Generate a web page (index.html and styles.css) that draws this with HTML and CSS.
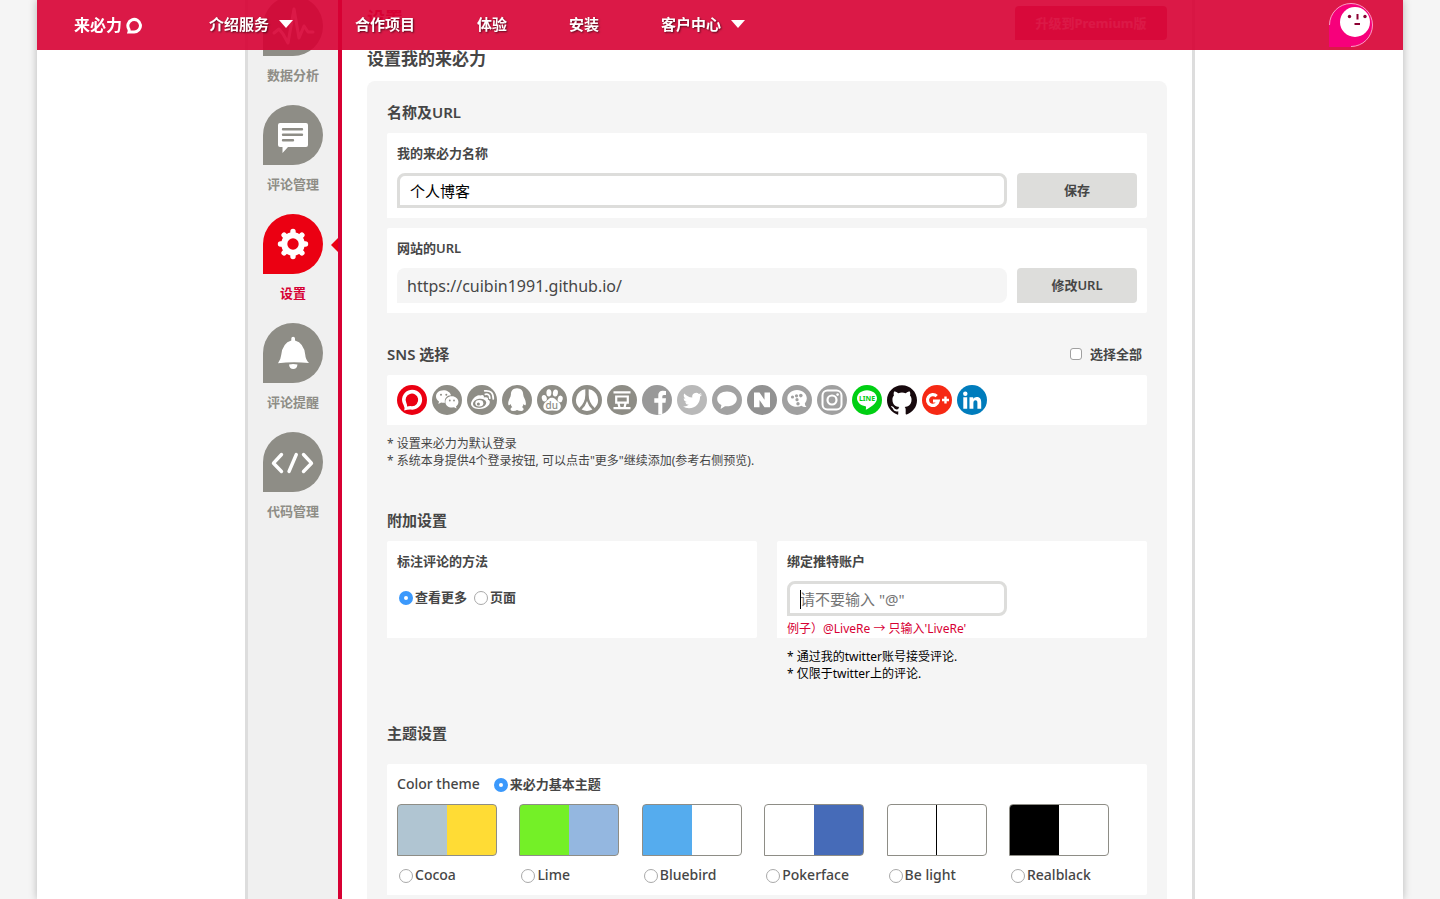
FILE: index.html
```html
<!DOCTYPE html>
<html lang="zh-CN">
<head>
<meta charset="utf-8">
<meta name="viewport" content="width=device-width, initial-scale=1">
<title>来必力 - 设置</title>
<link rel="stylesheet" href="styles.css">
</head>
<body>
<div class="page">
  <header class="topbar">
    <a class="logo" href="#">来必力<svg viewBox="0 0 16 17" aria-hidden="true"><path d="M3 15H8A6.300 6.300 0 1 0 2.800 12Q3.500 13.500 3 15Z"/></svg></a>
    <nav class="nav">
      <a href="#">介绍服务<i class="caret"></i></a>
      <a href="#">合作项目</a>
      <a href="#">体验</a>
      <a href="#">安装</a>
      <a href="#">客户中心<i class="caret"></i></a>
    </nav>
    <a class="avatar" href="#" aria-label="账户">
      <svg viewBox="0 0 44 44"><rect x="0" y="22" width="22" height="22" fill="#f7007b"/><circle cx="22" cy="22" r="21.500" fill="#f7007b"/><path d="M.5 22A21.500 21.500 0 0 1 22 .5A21.500 21.500 0 0 1 43.500 22A21.500 21.500 0 0 1 22 43.500" fill="none" stroke="#fb9cc4"/><circle cx="26" cy="19" r="15" fill="#fff"/><circle cx="20.500" cy="13.500" r="1.700" fill="#8c0032"/><circle cx="36" cy="13.500" r="1.700" fill="#8c0032"/><path d="M28.500 11v5.500M25.500 21h5.500" stroke="#8c0032" stroke-width="2"/></svg>
    </a>
  </header>

  <div class="layout">
    <nav class="sidebar">
      <a class="side-item" href="#">
        <svg class="side-icon" viewBox="0 0 60 60"><path d="M11 37L16 33L20 38L25 47L31 13L36 42L41 30L45 36H50" fill="none" stroke="#fff" stroke-width="3" stroke-linejoin="round" stroke-linecap="round"/></svg>
        <span>数据分析</span>
      </a>
      <a class="side-item" href="#">
        <svg class="side-icon" viewBox="0 0 60 60"><path d="M17 18H43Q45 18 45 20V40Q45 42 43 42H25L19.500 48V42H17Q15 42 15 40V20Q15 18 17 18Z" fill="#fff"/><path d="M20 24.300H39M20 29.800H39M20 35.200H30" stroke="#8e8d86" stroke-width="2.400" stroke-linecap="round"/></svg>
        <span>评论管理</span>
      </a>
      <a class="side-item active" href="#">
        <svg class="side-icon" viewBox="0 0 60 60"><circle cx="30" cy="30" r="11.800" fill="#fff"/><path d="M30 17.500V42.500M17.500 30H42.500M21.100 21.100L38.900 38.900M38.900 21.100L21.100 38.900" stroke="#fff" stroke-width="5.400" stroke-linecap="round"/><circle cx="30" cy="30" r="5.700" fill="#eb0012"/></svg>
        <span>设置</span>
      </a>
      <a class="side-item" href="#">
        <svg class="side-icon" viewBox="0 0 60 60"><path d="M28.300 15.500A1.700 1.700 0 0 1 32 15.500V17.500Q41 20 42.300 32Q42.500 36.500 46 40Q30 38.200 15 40.200Q17.800 36.500 18.200 32Q19.500 20 28.300 17.500Z" fill="#fff"/><path d="M26 41.500Q30 40.500 34.500 41.500Q34 46 30.200 46Q26.500 46 26 41.500Z" fill="#fff"/></svg>
        <span>评论提醒</span>
      </a>
      <a class="side-item" href="#">
        <svg class="side-icon" viewBox="0 0 60 60"><path d="M18.500 22.500L10.500 31.200L18.500 39.500M40.500 22.500L48.500 31.200L40.500 39.500M33.300 22.500L26 39.500" fill="none" stroke="#fff" stroke-width="3.400" stroke-linecap="round" stroke-linejoin="round"/></svg>
        <span>代码管理</span>
      </a>
    </nav>

    <main class="content">
      <div class="title-row">
        <h1>设置</h1>
        <button class="premium" type="button">升级到Premium版</button>
      </div>
      <h2>设置我的来必力</h2>

      <div class="panel">
        <section>
          <h3>名称及URL</h3>
          <div class="card">
            <label class="field-label" for="site-name">我的来必力名称</label>
            <div class="field-row">
              <input class="text-input" id="site-name" type="text" value="个人博客">
              <button class="btn" type="button">保存</button>
            </div>
          </div>
          <div class="card">
            <label class="field-label" for="site-url">网站的URL</label>
            <div class="field-row">
              <input class="text-input locked" id="site-url" type="text" value="https://cuibin1991.github.io/" readonly>
              <button class="btn" type="button">修改URL</button>
            </div>
          </div>
        </section>

        <section>
          <div class="heading-row">
            <h3>SNS 选择</h3>
            <label class="check"><input type="checkbox">选择全部</label>
          </div>
          <div class="card sns">
            <button type="button" aria-label="LiveRe"><svg viewBox="0 0 30 30"><circle cx="15" cy="15" r="15" fill="#eb0012"/><path d="M7.200 25.500Q8 22.500 6.600 20A10 10 0 1 1 15.500 24.700Q11 24.300 7.200 25.500Z" fill="#fff"/><path d="M10 21.500Q10.300 20 9.300 17.800A6.300 6.300 0 1 1 15 21.200Q12.500 20.900 10 21.500Z" fill="#eb0012"/></svg></button>
            <button type="button" aria-label="WeChat"><svg viewBox="0 0 30 30"><circle cx="15" cy="15" r="15" fill="#8e8d86"/><path d="M11.500 5.200C7 5.200 4 8 4 11.500C4 13.600 5.200 15.200 7 16.500L6.300 19L9.200 17.500Q11 18 13 17.700C12 13.500 15 10.300 19 10.200C18.300 7.200 15 5.200 11.500 5.200Z" fill="#fff"/><path d="M19.800 11.300C16 11.300 13.400 13.900 13.400 17C13.400 20.200 16.200 22.600 20 22.600L22 22.300L24.600 23.600L24 21.500C25.500 20.400 26.400 18.900 26.400 17C26.400 13.900 23.500 11.300 19.800 11.300Z" fill="#fff"/><g fill="#8e8d86"><circle cx="9" cy="9.700" r="1"/><circle cx="14.300" cy="9.700" r="1"/><circle cx="17.800" cy="15.500" r=".9"/><circle cx="22" cy="15.500" r=".9"/></g></svg></button>
            <button type="button" aria-label="Weibo"><svg viewBox="0 0 30 30"><circle cx="15" cy="15" r="15" fill="#8e8d86"/><path d="M13 10.500C15.500 9.300 17.500 10 16.800 12.500C20 11.500 21.800 12.700 20.800 14.600C23 15.400 23.500 17.300 22 19.700C20 22.500 16 24.200 11.500 24C6.800 23.700 3.700 21.300 4 18.200C4.300 15.500 9.500 9 13 10.500Z" fill="#fff"/><ellipse cx="12.600" cy="18.300" rx="6.700" ry="4.500" transform="rotate(-8 12.600 18.300)" fill="#8e8d86"/><ellipse cx="12.300" cy="18.300" rx="4" ry="3.200" fill="#fff"/><circle cx="11.400" cy="18.900" r="1.500" fill="#8e8d86"/><path d="M18.300 9.300Q22.800 8.500 22.800 13.200M17.700 5.900Q26.500 5 26.300 14" fill="none" stroke="#fff" stroke-width="1.700" stroke-linecap="round"/></svg></button>
            <button type="button" aria-label="QQ"><svg viewBox="0 0 30 30"><circle cx="15" cy="15" r="15" fill="#8e8d86"/><path d="M15 3.200C11 3.200 8.800 6 8.900 9.500C9 12 6.200 15 6.200 18.200C6.200 20.500 7 21 8.600 19Q9 21 10.300 22.300C8 23 7.800 25.800 11 26Q14 26 15 25Q16.500 26 19.500 26C22.500 25.700 22 23 20 22.300Q21.200 21 21.600 19C23 21 23.900 20.500 23.900 18.200C23.900 15 21.200 12 21.200 9.500C21.300 6 19 3.200 15 3.200Z" fill="#fff"/></svg></button>
            <button type="button" aria-label="Baidu"><svg viewBox="0 0 30 30"><circle cx="15" cy="15" r="15" fill="#8e8d86"/><g fill="#fff"><ellipse cx="7.300" cy="13.300" rx="2.500" ry="3.300" transform="rotate(-12 7.300 13.300)"/><ellipse cx="11.900" cy="7.800" rx="2.500" ry="3.600"/><ellipse cx="18.400" cy="8" rx="2.500" ry="3.500" transform="rotate(10 18.400 8)"/><ellipse cx="23.200" cy="13.900" rx="2.500" ry="3.300" transform="rotate(12 23.200 13.900)"/><path d="M15 12.800C18 12.800 18.500 15 21.500 17C25.500 20 24 25.800 19.500 25.800Q15 25 11 25.800C6 26 4.800 20.500 8.500 17C11.500 14.800 11.800 12.800 15 12.800Z"/></g><text x="14.800" y="24" class="icon-du">du</text></svg></button>
            <button type="button" aria-label="Renren"><svg viewBox="0 0 30 30"><circle cx="15" cy="15" r="15" fill="#8e8d86"/><g fill="#fff"><path d="M13.300 4.300V10Q13.300 17.500 7.300 23A11 11 0 0 1 13.300 4.300Z"/><path d="M16.700 4.300V10Q16.700 17.500 22.700 23A11 11 0 0 0 16.700 4.300Z"/><path d="M15 16Q13.500 21 9.600 24.600Q15 27.500 20.400 24.600Q16.500 21 15 16Z"/></g></svg></button>
            <button type="button" aria-label="Douban"><svg viewBox="0 0 30 30"><circle cx="15" cy="15" r="15" fill="#8e8d86"/><path d="M6.500 7.300H23.500M6.500 23.200H23.500M9.200 11.500H20.800V17.700H9.200ZM11.500 18.500L12.500 22.500M18.500 18.500L17.500 22.500" fill="none" stroke="#fff" stroke-width="2.200"/></svg></button>
            <button type="button" aria-label="Facebook"><svg viewBox="0 0 30 30"><circle cx="15" cy="15" r="15" fill="#999"/><path d="M16.300 29.500V17.700H12.300V13.300H16.300V10.500C16.300 7 18.500 5.800 21 5.800Q23 5.800 24 6V10H22C20.500 10 20.300 10.700 20.300 12V13.300H24L23.500 17.700H20.300V29Z" fill="#fff"/></svg></button>
            <button type="button" aria-label="Twitter"><svg viewBox="0 0 30 30"><circle cx="15" cy="15" r="15" fill="#b9b9b9"/><path transform="translate(6 6) scale(.79)" fill="#fff" d="M23.953 4.570a10 10 0 01-2.825.775 4.958 4.958 0 002.163-2.723c-.951.555-2.005.959-3.127 1.184a4.920 4.920 0 00-8.384 4.482C7.690 8.095 4.067 6.130 1.640 3.162a4.822 4.822 0 00-.666 2.475c0 1.710.87 3.213 2.188 4.096a4.904 4.904 0 01-2.228-.616v.06a4.923 4.923 0 003.946 4.827 4.996 4.996 0 01-2.212.085 4.936 4.936 0 004.604 3.417 9.867 9.867 0 01-6.102 2.105c-.39 0-.779-.023-1.170-.067a13.995 13.995 0 007.557 2.209c9.053 0 13.998-7.496 13.998-13.985 0-.21 0-.42-.015-.63A9.935 9.935 0 0024 4.590z"/></svg></button>
            <button type="button" aria-label="Kakao"><svg viewBox="0 0 30 30"><circle cx="15" cy="15" r="15" fill="#a2a2a2"/><path d="M15 6.500C9.500 6.500 5.200 9.700 5.200 13.900C5.200 16.500 6.800 18.800 9.400 20.100L8.600 24L13 21.200Q14 21.300 15 21.300C20.500 21.300 24.800 18 24.800 13.900C24.800 9.700 20.500 6.500 15 6.500Z" fill="#fff"/></svg></button>
            <button type="button" aria-label="Naver"><svg viewBox="0 0 30 30"><circle cx="15" cy="15" r="15" fill="#929292"/><path d="M7 7.500H12.500L17.500 14.800V7.500H23V22.300H17.500L12.500 15V22.300H7Z" fill="#fff"/></svg></button>
            <button type="button" aria-label="Tistory"><svg viewBox="0 0 30 30"><circle cx="15" cy="15" r="15" fill="#a0a0a0"/><path d="M15 5C9.500 5 5.300 8.600 5.300 13.400C5.300 18.200 9.500 21.800 15 21.800Q17.500 21.700 19.500 20.700Q21.500 22.500 24.500 21.800Q22.800 20.500 22.800 18.400Q24.800 16.300 24.800 13.400C24.800 8.600 20.500 5 15 5Z" fill="#fff"/><g fill="#a0a0a0"><circle cx="10.500" cy="12" r="1.600"/><circle cx="14.500" cy="10.800" r="1.600"/><circle cx="18.800" cy="10.600" r="1.800"/><circle cx="15" cy="14.700" r="1.600"/><circle cx="16" cy="18.700" r="1.700"/></g></svg></button>
            <button type="button" aria-label="Instagram"><svg viewBox="0 0 30 30"><circle cx="15" cy="15" r="15" fill="#a0a0a0"/><rect x="5.500" y="5.500" width="19" height="19" rx="5" fill="none" stroke="#fff" stroke-width="2"/><circle cx="15" cy="15" r="4.500" fill="none" stroke="#fff" stroke-width="2.200"/><circle cx="20.600" cy="9.600" r="1.300" fill="#fff"/></svg></button>
            <button type="button" aria-label="LINE"><svg viewBox="0 0 30 30"><circle cx="15" cy="15" r="15" fill="#00cf13"/><path d="M15 5.200C9.500 5.200 5 8.800 5 13.300C5 17.300 8.500 20.600 13.300 21.300C14.500 21.600 14 22.500 13.800 24.800C18 22.800 25 18.500 25 13.300C25 8.800 20.500 5.200 15 5.200Z" fill="#fff"/><text x="15" y="16" class="icon-line">LINE</text></svg></button>
            <button type="button" aria-label="GitHub"><svg viewBox="0 0 24 24"><path fill="#17090d" d="M12 .297c-6.630 0-12 5.373-12 12 0 5.303 3.438 9.800 8.205 11.385.6.113.82-.258.82-.577 0-.285-.01-1.040-.015-2.040-3.338.724-4.042-1.610-4.042-1.610C4.422 18.070 3.633 17.700 3.633 17.700c-1.087-.744.084-.729.084-.729 1.205.084 1.838 1.236 1.838 1.236 1.070 1.835 2.809 1.305 3.495.998.108-.776.417-1.305.76-1.605-2.665-.3-5.466-1.332-5.466-5.930 0-1.310.465-2.380 1.235-3.220-.135-.303-.54-1.523.105-3.176 0 0 1.005-.322 3.300 1.230.96-.267 1.980-.399 3-.405 1.020.006 2.040.138 3 .405 2.280-1.552 3.285-1.230 3.285-1.230.645 1.653.24 2.873.12 3.176.765.84 1.230 1.910 1.230 3.220 0 4.610-2.805 5.625-5.475 5.920.42.36.81 1.096.81 2.220 0 1.606-.015 2.896-.015 3.286 0 .315.21.69.825.57C20.565 22.092 24 17.592 24 12.297c0-6.627-5.373-12-12-12"/></svg></button>
            <button type="button" aria-label="Google+"><svg viewBox="0 0 30 30"><circle cx="15" cy="15" r="15" fill="#f62914"/><path d="M14.700 11.200A5.400 5.400 0 1 0 16.200 16H11" fill="none" stroke="#fff" stroke-width="3.200"/><path d="M23.500 11.500V18.500M20 15H27" stroke="#fff" stroke-width="2.400"/></svg></button>
            <button type="button" aria-label="LinkedIn"><svg viewBox="0 0 30 30"><circle cx="15" cy="15" r="15" fill="#007cbc"/><circle cx="8.300" cy="8.700" r="2.200" fill="#fff"/><path d="M6.300 12.300H10.200V23.800H6.300ZM12.500 12.300H16.200V13.800Q17.300 12 19.700 12C23.500 12 24.200 14.500 24.200 17.500V23.800H20.400V18C20.400 16.300 20 15.300 18.500 15.300C17 15.300 16.400 16.500 16.400 18V23.800H12.500Z" fill="#fff"/></svg></button>
          </div>
          <p class="hints">* 设置来必力为默认登录<br>* 系统本身提供4个登录按钮, 可以点击"更多"继续添加(参考右侧预览).</p>
        </section>

        <section>
          <h3>附加设置</h3>
          <div class="columns">
            <fieldset class="card">
              <legend class="field-label">标注评论的方法</legend>
              <div class="radio-row">
                <label class="radio"><input type="radio" name="paging" checked>查看更多</label>
                <label class="radio"><input type="radio" name="paging">页面</label>
              </div>
            </fieldset>
            <div class="card twitter">
              <label class="field-label" for="twitter">绑定推特账户</label>
              <div class="focused"><input class="text-input" id="twitter" type="text" placeholder="请不要输入 &quot;@&quot;"></div>
              <p class="example">例子）@LiveRe → 只输入'LiveRe'</p>
            </div>
            <p class="hints dark">* 通过我的twitter账号接受评论.<br>* 仅限于twitter上的评论.</p>
          </div>
        </section>

        <section class="theme-section">
          <h3>主题设置</h3>
          <div class="card">
            <div class="theme-head">
              <span>Color theme</span>
              <label class="radio"><input type="radio" name="theme" checked>来必力基本主题</label>
            </div>
            <div class="themes">
              <label class="theme"><span class="swatch cocoa"></span><span class="radio"><input type="radio" name="theme">Cocoa</span></label>
              <label class="theme"><span class="swatch lime"></span><span class="radio"><input type="radio" name="theme">Lime</span></label>
              <label class="theme"><span class="swatch bluebird"></span><span class="radio"><input type="radio" name="theme">Bluebird</span></label>
              <label class="theme"><span class="swatch pokerface"></span><span class="radio"><input type="radio" name="theme">Pokerface</span></label>
              <label class="theme"><span class="swatch belight"></span><span class="radio"><input type="radio" name="theme">Be light</span></label>
              <label class="theme"><span class="swatch realblack"></span><span class="radio"><input type="radio" name="theme">Realblack</span></label>
            </div>
          </div>
        </section>
      </div>
    </main>
  </div>
</div>
</body>
</html>
```
FILE: styles.css
```css
* { box-sizing: border-box; }

body {
  margin: 0;
  background: #f5f5f5;
  color: #464646;
  font: 500 13px/20px "Noto Sans", "Noto Sans CJK SC", sans-serif;
}

h1, h2, h3, p, fieldset { margin: 0; }
a { color: inherit; text-decoration: none; }
button, input { font: inherit; color: inherit; }
button { cursor: pointer; border: 0; }
svg { display: block; }

.page {
  max-width: 1366px;
  min-height: 100vh;
  margin: 0 auto;
  background: #fff;
  box-shadow: 0 0 8px rgba(0, 0, 0, .25);
  display: flex;
  flex-direction: column;
}

/* Top bar */
.topbar {
  position: fixed;
  top: 0;
  z-index: 10;
  width: 100%;
  max-width: 1366px;
  height: 50px;
  padding: 0 30px 0 37px;
  display: flex;
  align-items: center;
  background: rgba(215, 0, 51, .9);
  color: #fff;
  font-size: 15px;
  font-weight: 700;
}
.logo { display: flex; align-items: center; gap: 4px; font-size: 16px; }
.logo svg { width: 16px; height: 17px; fill: none; stroke: #fff; stroke-width: 3; }
.nav {
  flex: 1;
  display: flex;
  gap: 62px;
  margin-left: 67px;
  padding-bottom: 2px;
  text-shadow: 1px 1px 2px rgba(0, 0, 0, .6);
}
.nav a { display: flex; align-items: center; gap: 10px; }
.caret {
  border: 7px solid transparent;
  border-top: 8px solid #fff;
  border-bottom: 0;
}
.avatar { width: 44px; height: 44px; }

/* Columns */
.layout {
  flex: 1;
  width: 100%;
  max-width: 950px;
  margin: 0 auto;
  display: flex;
  border: solid #ddd;
  border-width: 0 3px;
}
.sidebar {
  width: 94px;
  flex: none;
  background: #f0f0f0;
  border-right: 4px solid #d70033;
}
.side-item {
  position: relative;
  display: flex;
  flex-direction: column;
  align-items: center;
  gap: 9px;
  margin-bottom: 20px;
  color: #8e8d86;
  font-weight: 700;
}
.side-item:first-child { margin-top: -4px; }
.side-icon {
  width: 60px;
  height: 60px;
  background: #8e8d86;
  border-radius: 50% 50% 50% 0;
}
.side-item.active { color: #d70033; }
.active .side-icon { background: #eb0012; }
.active::after {
  content: "";
  position: absolute;
  right: 0;
  top: 24px;
  border: 7px solid transparent;
  border-right-color: #eb0012;
  border-left: 0;
}
.content {
  flex: 1;
  min-width: 0;
  padding: 6px 25px 0;
  display: flex;
  flex-direction: column;
}
.title-row { display: flex; justify-content: space-between; align-items: flex-start; }
h1 { font-size: 18px; line-height: 24px; color: #d70033; }
.premium {
  width: 152px;
  height: 34px;
  border-radius: 4px 4px 4px 0;
  background: #e0607c;
  color: #fff;
  font-weight: 700;
}
h2 { margin: 7px 0 10px; font-size: 17px; line-height: 24px; font-weight: 700; }
h3 { margin-bottom: 10px; font-size: 15px; line-height: 22px; font-weight: 600; }

.panel {
  flex: 1;
  padding: 20px 20px 4px;
  background: #f5f5f5;
  border-radius: 8px 8px 0 0;
}
.panel section + section { margin-top: 30px; }
.panel section:nth-child(n + 3) { margin-top: 40px; }
.card {
  padding: 10px;
  background: #fff;
  border: 0;
  border-radius: 2px 2px 2px 0;
}
.card + .card { margin-top: 10px; }
.field-label { display: block; margin-bottom: 10px; padding: 0; font-weight: 600; }
.field-row { display: flex; gap: 10px; }
.text-input {
  flex: 1;
  min-width: 0;
  height: 35px;
  padding: 0 10px;
  border: 3px solid #dddddb;
  border-radius: 8px 8px 8px 0;
  background: #fff;
  color: #000;
  font-size: 15px;
  font-weight: 400;
}
.text-input::placeholder { color: #757575; opacity: 1; }
.text-input.locked { border: 0; background: #f5f5f5; color: #464646; font-size: 16px; }
.btn {
  width: 120px;
  height: 35px;
  padding: 0 0 2px;
  background: #dddddb;
  border-radius: 4px 4px 4px 0;
  font-weight: 600;
}

/* SNS */
.heading-row { display: flex; justify-content: space-between; padding-right: 5px; }
.check { display: flex; align-items: center; gap: 8px; height: 22px; font-weight: 600; }
.sns { display: flex; flex-wrap: wrap; gap: 5px; }
.sns button { width: 30px; height: 30px; padding: 0; background: none; }
.icon-du { font: 500 10px "Noto Sans", sans-serif; text-anchor: middle; fill: #8e8d86; }
.icon-line { font: 700 7px "Noto Sans", sans-serif; text-anchor: middle; fill: #00cf13; }
.hints { margin-top: 10px; font-size: 12px; line-height: 17px; font-weight: 400; }
.dark { grid-column: 2; padding-left: 10px; color: #000; }

/* Extra settings */
.columns { display: grid; grid-template-columns: 1fr 1fr; column-gap: 20px; }
.columns .card { margin: 0; min-width: 0; }
legend { float: left; width: 100%; }
.radio-row { clear: both; display: flex; gap: 5px; height: 32px; }
.radio { display: flex; align-items: center; gap: 2px; font-weight: 600; }
input[type="radio"] {
  appearance: none;
  flex: none;
  width: 14px;
  height: 14px;
  margin: 1px 0 0 2px;
  border: 1px solid #a9a9a9;
  border-radius: 50%;
  background: #fff;
}
input[type="radio"]:checked { border: 5px solid #3b99fc; }
input[type="checkbox"] {
  appearance: none;
  width: 12px;
  height: 12px;
  margin: 0;
  border: 1px solid #a0a0a0;
  border-radius: 3px;
  background: #fff;
}
.twitter { padding-bottom: 0; }
.focused { position: relative; display: flex; max-width: 220px; }
.focused::before {
  content: "";
  position: absolute;
  left: 13px;
  top: 9px;
  width: 1px;
  height: 19px;
  background: #000;
}
.example { margin-top: 4px; font-size: 12px; line-height: 18px; font-weight: 400; color: #d70033; }

/* Themes */
.theme-section h3 { margin-bottom: 20px; }
.theme-head { display: flex; gap: 12px; margin-bottom: 10px; }
.theme-head span, .theme .radio { font-size: 14px; font-weight: 500; }
.themes { display: flex; justify-content: space-between; padding-right: 28px; }
.theme { width: 100px; display: flex; flex-direction: column; gap: 9px; }
.swatch {
  height: 52px;
  border: 1px solid #8e8d86;
  border-radius: 4px 4px 4px 0;
  background: #fff;
}
.cocoa { background: linear-gradient(90deg, #b0c5d2 50%, #ffdc35 50%); }
.lime { background: linear-gradient(90deg, #74f027 50%, #94b7e0 50%); }
.bluebird { background: linear-gradient(90deg, #55acee 50%, #fff 50%); }
.pokerface { background: linear-gradient(90deg, #fff 50%, #466bb8 50%); }
.belight { background: linear-gradient(90deg, #fff 48px, #000 48px, #000 49px, #fff 49px); }
.realblack { background: linear-gradient(90deg, #000 50%, #fff 50%); }
```
